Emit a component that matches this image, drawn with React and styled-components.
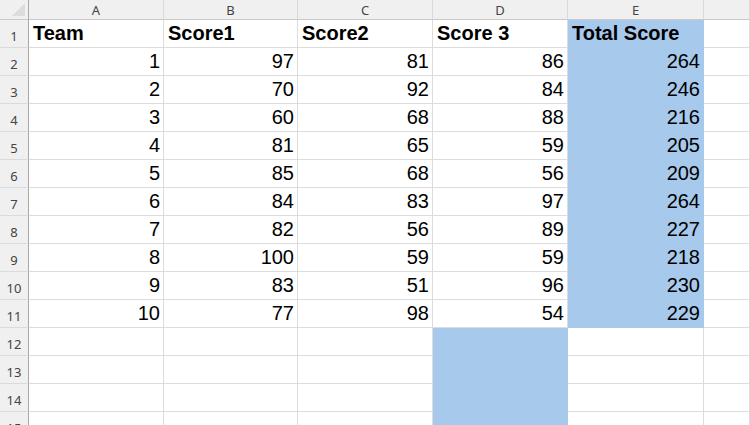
import styled, { createGlobalStyle } from 'styled-components';

const GlobalStyle = createGlobalStyle`
  html, body {
    margin: 0;
    padding: 0;
    background: #ffffff;
    overflow: hidden;
  }
`;

const COLUMNS = ['A', 'B', 'C', 'D', 'E'];
const HEADERS = ['Team', 'Score1', 'Score2', 'Score 3', 'Total Score'];
const DATA = [
  [1, 97, 81, 86, 264],
  [2, 70, 92, 84, 246],
  [3, 60, 68, 88, 216],
  [4, 81, 65, 59, 205],
  [5, 85, 68, 56, 209],
  [6, 84, 83, 97, 264],
  [7, 82, 56, 89, 227],
  [8, 100, 59, 59, 218],
  [9, 83, 51, 96, 230],
  [10, 77, 98, 54, 229],
];
const TOTAL_ROWS = 15;
const BLUE = '#a7c9ec';

// which cells carry the blue fill: column E for rows 1-11, column D below the data
const isFilled = (row, col) => (col === 4 && row <= 11) || (col === 3 && row >= 12);

function Sheet() {
  const rows = [];
  for (let r = 1; r <= TOTAL_ROWS; r++) {
    const cells = [];
    for (let c = 0; c < 6; c++) {
      let value = '';
      let align = 'left';
      let bold = false;
      if (c < 5 && r === 1) {
        value = HEADERS[c];
        bold = true;
      } else if (c < 5 && r <= 11) {
        value = DATA[r - 2][c];
        align = 'right';
      }
      cells.push(
        <Cell key={c} $align={align} $bold={bold} $filled={isFilled(r, c)}>
          {value}
        </Cell>
      );
    }
    rows.push(
      <Row key={r}>
        <RowHead>{r}</RowHead>
        {cells}
      </Row>
    );
  }

  return (
    <Grid>
      <Row>
        <Corner>
          <CornerMark />
        </Corner>
        {COLUMNS.map((l) => (
          <ColHead key={l}>{l}</ColHead>
        ))}
        <ColHead />
      </Row>
      {rows}
    </Grid>
  );
}

export default function App() {
  return (
    <>
      <GlobalStyle />
      <Sheet />
    </>
  );
}

const Grid = styled.div`
  width: 750px;
  height: 425px;
  overflow: hidden;
  display: grid;
  grid-template-columns: 29px 135px 134px 135px 135px 136px 1fr;
  grid-auto-rows: 28px;
  grid-template-rows: 20px;
`;

const Row = styled.div`
  display: contents;
`;

const headBase = `
  box-sizing: border-box;
  background: #f0f0f0;
  color: #444444;
  font-family: "Noto Sans", "Liberation Sans", sans-serif;
  font-size: 13px;
  display: flex;
  align-items: center;
  justify-content: center;
`;

const Corner = styled.div`
  ${headBase}
  position: relative;
  border-right: 1px solid #a8a8a8;
  border-bottom: 1px solid #c8c8c8;
`;

const CornerMark = styled.div`
  position: absolute;
  right: 3px;
  bottom: 3px;
  width: 0;
  height: 0;
  border-left: 13px solid transparent;
  border-bottom: 13px solid #dcdcdc;
`;

const ColHead = styled.div`
  ${headBase}
  padding-top: 1px;
  border-right: 1px solid #dadada;
  border-bottom: 1px solid #c8c8c8;
`;

const RowHead = styled.div`
  ${headBase}
  padding-top: 5px;
  border-right: 1px solid #a8a8a8;
  border-bottom: 1px solid #dadada;
`;

const Cell = styled.div`
  box-sizing: border-box;
  border-right: 1px solid ${(p) => (p.$filled ? BLUE : '#dcdcdc')};
  border-bottom: 1px solid ${(p) => (p.$filled ? BLUE : '#dcdcdc')};
  background: ${(p) => (p.$filled ? BLUE : '#ffffff')};
  font-family: "Liberation Sans", Arial, sans-serif;
  font-size: 20px;
  font-weight: ${(p) => (p.$bold ? 700 : 400)};
  color: #000000;
  line-height: 27px;
  text-align: ${(p) => p.$align};
  padding: 0 3px 0 4px;
  white-space: nowrap;
  overflow: hidden;
`;
